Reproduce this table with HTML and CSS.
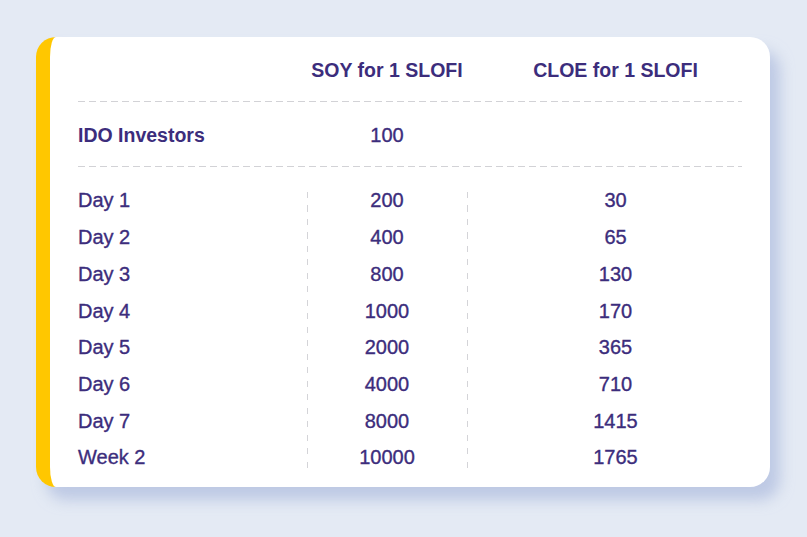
FILE: index.html
```html
<!DOCTYPE html>
<html lang="en">
<head>
<meta charset="utf-8">
<title>SLOFI rates</title>
<link rel="stylesheet" href="styles.css">
</head>
<body>
<div class="card">
  <div class="row head">
    <div class="cell label"></div>
    <div class="cell c2">SOY for 1 SLOFI</div>
    <div class="cell c3">CLOE for 1 SLOFI</div>
  </div>
  <div class="dash"></div>
  <div class="row ido">
    <div class="cell label strong">IDO Investors</div>
    <div class="cell c2">100</div>
    <div class="cell c3"></div>
  </div>
  <div class="dash"></div>
  <div class="rows">
    <div class="row day"><div class="cell label">Day 1</div><div class="cell c2">200</div><div class="cell c3">30</div></div>
    <div class="row day"><div class="cell label">Day 2</div><div class="cell c2">400</div><div class="cell c3">65</div></div>
    <div class="row day"><div class="cell label">Day 3</div><div class="cell c2">800</div><div class="cell c3">130</div></div>
    <div class="row day"><div class="cell label">Day 4</div><div class="cell c2">1000</div><div class="cell c3">170</div></div>
    <div class="row day"><div class="cell label">Day 5</div><div class="cell c2">2000</div><div class="cell c3">365</div></div>
    <div class="row day"><div class="cell label">Day 6</div><div class="cell c2">4000</div><div class="cell c3">710</div></div>
    <div class="row day"><div class="cell label">Day 7</div><div class="cell c2">8000</div><div class="cell c3">1415</div></div>
    <div class="row day"><div class="cell label">Week 2</div><div class="cell c2">10000</div><div class="cell c3">1765</div></div>
  </div>
</div>
</body>
</html>
```
FILE: styles.css
```css
* { box-sizing: border-box; }
html, body { margin: 0; }
body {
  width: 807px;
  height: 537px;
  background: #e4eaf4;
  padding: 37px 37px 0 36px;
  font-family: "Liberation Sans", Arial, sans-serif;
  color: #3c2d7c;
  overflow: hidden;
}
.card {
  width: 734px;
  height: 450px;
  background: #fff;
  border-left: 14px solid #ffc700;
  border-radius: 20px;
  padding: 0 28px 0 28px;
  box-shadow: 10px 13px 14px rgba(165, 180, 218, 0.6);
}
.row {
  display: grid;
  grid-template-columns: 229px 160px 275px;
  align-items: center;
}
.cell { font-size: 20px; -webkit-text-stroke: 0.35px #3c2d7c; }
.c2 { text-align: center; }
.c3 { text-align: center; padding-left: 22px; }
.head { height: 64px; padding-top: 3px; }
.head .cell, .strong { font-weight: 700; font-size: 19.5px; -webkit-text-stroke: 0; }
.ido { height: 64px; padding-top: 3px; }
.dash {
  height: 1px;
  background: repeating-linear-gradient(to right, #d2d2d6 0 7px, transparent 7px 11px);
}
.rows {
  padding: 15.6px 0 10px;
  background-image:
    repeating-linear-gradient(to bottom, #d4d4d8 0 6px, transparent 6px 13.5px),
    repeating-linear-gradient(to bottom, #d4d4d8 0 6px, transparent 6px 13.5px);
  background-size: 1px 276px, 1px 276px;
  background-position: 229px 25px, 389px 25px;
  background-repeat: no-repeat;
}
.day { height: 36.7px; }
```
